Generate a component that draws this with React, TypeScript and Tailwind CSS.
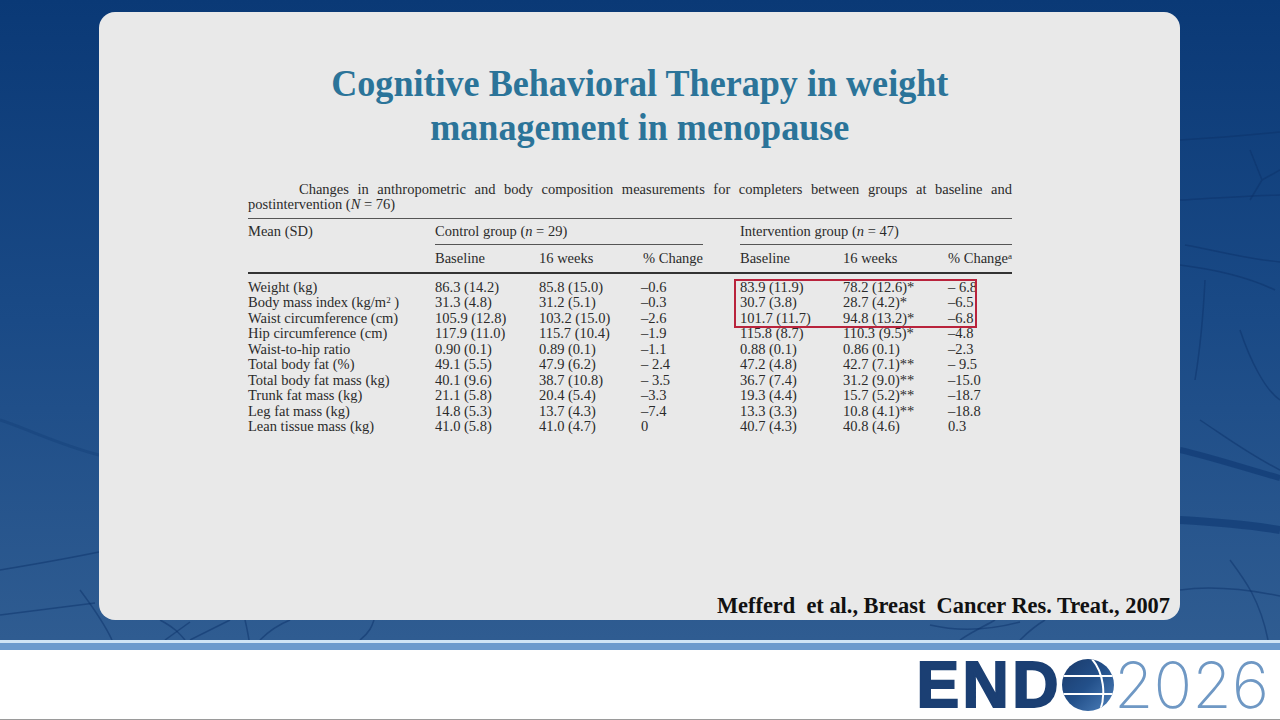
import React from 'react';

const serif = "font-['Liberation_Serif','Times_New_Roman',serif]";

type Row = { label: React.ReactNode; cells: string[] };

const rows: Row[] = [
    { label: 'Weight (kg)', cells: ['86.3 (14.2)', '85.8 (15.0)', '–0.6', '83.9 (11.9)', '78.2 (12.6)*', '– 6.8'] },
    {
        label: (
            <>
                Body mass index (kg/m<sup className="text-[9px]">2</sup> )
            </>
        ),
        cells: ['31.3 (4.8)', '31.2 (5.1)', '–0.3', '30.7 (3.8)', '28.7 (4.2)*', '–6.5'],
    },
    { label: 'Waist circumference (cm)', cells: ['105.9 (12.8)', '103.2 (15.0)', '–2.6', '101.7 (11.7)', '94.8 (13.2)*', '–6.8'] },
    { label: 'Hip circumference (cm)', cells: ['117.9 (11.0)', '115.7 (10.4)', '–1.9', '115.8 (8.7)', '110.3 (9.5)*', '–4.8'] },
    { label: 'Waist-to-hip ratio', cells: ['0.90 (0.1)', '0.89 (0.1)', '–1.1', '0.88 (0.1)', '0.86 (0.1)', '–2.3'] },
    { label: 'Total body fat (%)', cells: ['49.1 (5.5)', '47.9 (6.2)', '– 2.4', '47.2 (4.8)', '42.7 (7.1)**', '– 9.5'] },
    { label: 'Total body fat mass (kg)', cells: ['40.1 (9.6)', '38.7 (10.8)', '– 3.5', '36.7 (7.4)', '31.2 (9.0)**', '–15.0'] },
    { label: 'Trunk fat mass (kg)', cells: ['21.1 (5.8)', '20.4 (5.4)', '–3.3', '19.3 (4.4)', '15.7 (5.2)**', '–18.7'] },
    { label: 'Leg fat mass (kg)', cells: ['14.8 (5.3)', '13.7 (4.3)', '–7.4', '13.3 (3.3)', '10.8 (4.1)**', '–18.8'] },
    { label: 'Lean tissue mass (kg)', cells: ['41.0 (5.8)', '41.0 (4.7)', '0', '40.7 (4.3)', '40.8 (4.6)', '0.3'] },
];

const cols = 'grid grid-cols-[187px_104px_102px_99px_103px_105px_64px]';

function Background() {
    return (
        <svg className="absolute inset-0 w-full h-full" viewBox="0 0 1280 640" fill="none">
            <g stroke="#0b3169" strokeOpacity="0.5" strokeWidth="1.5">
                <path d="M0 615 C40 610 70 606 95 603" />
                <path d="M0 570 C30 565 60 560 99 552" />
                <path d="M80 590 C95 610 105 625 112 640" />
                <path d="M160 620 C175 628 180 634 185 640" />
                <path d="M165 640 L190 622" />
                <path d="M190 640 L230 620" />
                <path d="M245 620 C247 628 248 634 249 640" />
                <path d="M260 640 C270 630 280 624 290 620" />
                <path d="M360 640 C370 632 372 626 374 620" />
                <path d="M930 625 C960 632 990 630 1020 622" />
                <path d="M960 640 C975 630 985 626 995 620" />
                <path d="M1020 640 C1028 632 1035 626 1045 620" />
                <path d="M1180 140 C1215 138 1250 135 1280 132" />
                <path d="M1180 200 C1215 198 1245 196 1280 195" />
                <path d="M1185 245 C1215 250 1240 258 1280 262" />
                <path d="M1180 265 C1220 270 1250 278 1275 290" />
                <path d="M1205 280 C1203 320 1200 350 1195 380" />
                <path d="M1250 150 L1262 180 M1262 180 L1280 170 M1262 180 L1250 200" />
                <path d="M1240 330 C1250 360 1265 390 1280 400" />
                <path d="M1200 420 C1230 440 1250 455 1280 470" />
                <path d="M1230 560 C1245 580 1260 600 1268 640" />
                <path d="M1180 590 C1215 585 1250 590 1280 596" />
            </g>
            <path d="M1180 450 C1215 458 1250 470 1280 478" stroke="#0d3772" strokeOpacity="0.6" strokeWidth="6" />
            <path d="M1180 520 C1215 522 1250 525 1280 530" stroke="#0d3772" strokeOpacity="0.6" strokeWidth="8" />
            <path d="M0 420 C30 430 60 445 99 455" stroke="#0d3772" strokeOpacity="0.3" strokeWidth="3" />
        </svg>
    );
}

function Globe() {
    return (
        <svg width="52" height="52" viewBox="0 0 52 52" className="shrink-0">
            <defs>
                <linearGradient id="globeFill" x1="0" y1="0" x2="1" y2="1">
                    <stop offset="0" stopColor="#1a3a6a" />
                    <stop offset="0.5" stopColor="#23508a" />
                    <stop offset="1" stopColor="#4f82bd" />
                </linearGradient>
                <clipPath id="globeClip">
                    <circle cx="26" cy="26" r="26" />
                </clipPath>
            </defs>
            <circle cx="26" cy="26" r="26" fill="url(#globeFill)" />
            <g clipPath="url(#globeClip)" stroke="#ffffff" fill="none">
                <path d="M0 17 H52" strokeWidth="2" />
                <path d="M0 35 H52" strokeWidth="2" />
                <path d="M30 0 C42 14 44 36 38 52" strokeWidth="2" />
            </g>
        </svg>
    );
}

export default function App() {
    return (
        <div className="w-[1280px] h-[720px] flex flex-col overflow-hidden bg-white">
            <div className="relative h-[640px] shrink-0 bg-gradient-to-b from-[#0a3976] via-[#1a4a86] to-[#2f5c91] pl-[99px] pr-[100px] pt-[12px] pb-[20px]">
                <Background />
                <div className="relative h-full rounded-[16px] bg-[#e9e9e9] flex flex-col items-center pt-[49px]">
                    <h1 className={`${serif} font-bold text-[38px] leading-[44px] text-[#2b7499] text-center scale-x-[0.95] whitespace-nowrap`}>
                        Cognitive Behavioral Therapy in weight
                        <br />
                        management in menopause
                    </h1>

                    <div className={`${serif} self-start ml-[149px] w-[764px] mt-[33px] text-[14.5px] text-[#2b2b2b]`}>
                        <p className="leading-[15px] indent-[51px] text-justify [text-align-last:justify]">
                            Changes in anthropometric and body composition measurements for completers between groups at baseline and
                        </p>
                        <p className="leading-[15px]">
                            postintervention (<i>N</i> = 76)
                        </p>

                        <div className="mt-[6px] border-t border-[#555]">
                            <div className={`${cols} leading-[15px] pt-[5px]`}>
                                <div>Mean (SD)</div>
                                <div className="col-span-3 pr-[37px]">
                                    <div>Control group (<i>n</i> = 29)</div>
                                    <div className="mt-[5px] border-t border-[#555]" />
                                </div>
                                <div className="col-span-3">
                                    <div>Intervention group (<i>n</i> = 47)</div>
                                    <div className="mt-[5px] border-t border-[#555]" />
                                </div>
                            </div>
                            <div className={`${cols} leading-[15px] pt-[6px] pb-[6px]`}>
                                <div />
                                <div>Baseline</div>
                                <div>16 weeks</div>
                                <div className="pl-[2px]">% Change</div>
                                <div>Baseline</div>
                                <div>16 weeks</div>
                                <div>
                                    % Change<sup className="text-[9px]">a</sup>
                                </div>
                            </div>
                        </div>

                        <div className="relative border-t-2 border-[#333] pt-[6px]">
                            {rows.map((row, i) => (
                                <div key={i} className={`${cols} h-[15.45px] leading-[15.45px] whitespace-pre`}>
                                    <div>{row.label}</div>
                                    {row.cells.map((c, j) => (
                                        <div key={j}>{c}</div>
                                    ))}
                                </div>
                            ))}
                            <div className="absolute left-[486px] top-[5px] w-[243px] h-[49px] border-2 border-[#b9233c]" />
                        </div>
                    </div>

                    <div className="mt-auto self-end pr-[10px] pb-[2px]">
                        <p className={`${serif} font-bold text-[22.4px] leading-[24px] text-[#111] whitespace-pre`}>
                            Mefferd  et al., Breast  Cancer Res. Treat., 2007
                        </p>
                    </div>
                </div>
            </div>

            <div className="h-[3px] shrink-0 bg-[#cfe5f5]" />
            <div className="h-[7px] shrink-0 bg-[#6b9bcd]" />

            <div className="flex-1 flex items-center justify-end pr-[9px]">
                <div className="flex items-center">
                    <span className="font-['Liberation_Sans',Arial,sans-serif] font-black text-[64px] leading-none text-[#1b3f73] [-webkit-text-stroke:2px_#1b3f73] tracking-[3.5px]">
                        END
                    </span>
                    <Globe />
                    <span className="inline-block pr-[2px] font-['Inter','Lato',sans-serif] font-extralight text-[64px] leading-[1.05] text-[#6f98c4]">
                        2026
                    </span>
                </div>
            </div>
            <div className="h-[1px] shrink-0 bg-[#9a9a9a]" />
        </div>
    );
}
